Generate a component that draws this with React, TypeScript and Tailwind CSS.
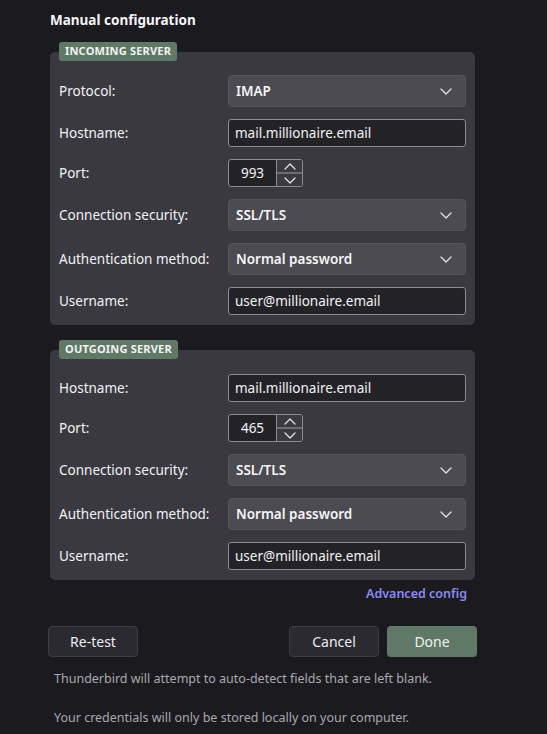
import React from "react";

const font = { fontFamily: '"Noto Sans", "Open Sans", sans-serif' };

const Chevron: React.FC<{ up?: boolean }> = ({ up }) => (
  <svg width="12" height="7" viewBox="0 0 12 7" fill="none" className="text-[#e8e8ec]">
    <path
      d={up ? "M1 6L6 1L11 6" : "M1 1L6 6L11 1"}
      stroke="currentColor"
      strokeWidth="1.2"
      strokeLinecap="round"
      strokeLinejoin="round"
    />
  </svg>
);

const Label: React.FC<{ children: React.ReactNode }> = ({ children }) => (
  <div className="w-[169px] shrink-0 text-[13.5px] text-[#f2f2f5]">{children}</div>
);

const Select: React.FC<{ value: string }> = ({ value }) => (
  <div className="flex h-[32px] flex-1 items-center justify-between rounded-[4px] border border-[#56555b] bg-[#4c4b51] pl-[7px] pr-[13px]">
    <span className="text-[13.5px] font-semibold text-[#f5f5f7]">{value}</span>
    <Chevron />
  </div>
);

const Input: React.FC<{ value: string }> = ({ value }) => (
  <div className="flex h-[28px] flex-1 items-center rounded-[3px] border border-[#8d8c93] bg-[#232327] px-[6px] text-[13.5px] text-[#f2f2f5]">
    {value}
  </div>
);

const Spin: React.FC<{ value: string }> = ({ value }) => (
  <div className="flex h-[28px] w-[75px] overflow-hidden rounded-[3px] border border-[#8d8c93] bg-[#232327]">
    <div className="flex flex-1 items-center justify-center text-[13.5px] text-[#f2f2f5]">{value}</div>
    <div className="flex w-[26px] flex-col border-l border-[#8d8c93] bg-[#3b3a40]">
      <div className="flex flex-1 items-center justify-center border-b-2 border-[#6e6d73]">
        <Chevron up />
      </div>
      <div className="flex flex-1 items-center justify-center">
        <Chevron />
      </div>
    </div>
  </div>
);

const Row: React.FC<{ label: string; children: React.ReactNode }> = ({ label, children }) => (
  <div className="flex items-center">
    <Label>{label}</Label>
    <div className="flex flex-1">{children}</div>
  </div>
);

const Panel: React.FC<{ title: string; pt: string; children: React.ReactNode }> = ({ title, pt, children }) => (
  <div className={`relative rounded-[5px] bg-[#3a393f] pb-[10px] pl-[9px] pr-[9px] ${pt}`}>
    <div className="absolute left-[9px] top-[-10px] flex h-[19px] items-center rounded-[3px] bg-[#5f7966] px-[6px] text-[11px] font-bold tracking-[0.2px] text-[#f2f2f2]">
      {title}
    </div>
    <div className="flex flex-col gap-3">{children}</div>
  </div>
);

export default function App() {
  return (
    <div className="min-h-screen w-[547px] bg-[#1b1a1f] pl-[50px] pr-[72px] pt-[10px]" style={font}>
      <h1 className="h-[21px] text-[13.5px] font-bold leading-[21px] text-[#f5f5f7]">Manual configuration</h1>

      <div className="mt-[21px]">
        <Panel title="INCOMING SERVER" pt="pt-[23px]">
          <Row label="Protocol:">
            <Select value="IMAP" />
          </Row>
          <Row label="Hostname:">
            <Input value="mail.millionaire.email" />
          </Row>
          <Row label="Port:">
            <Spin value="993" />
          </Row>
          <Row label="Connection security:">
            <Select value="SSL/TLS" />
          </Row>
          <Row label="Authentication method:">
            <Select value="Normal password" />
          </Row>
          <Row label="Username:">
            <Input value="user@millionaire.email" />
          </Row>
        </Panel>
      </div>

      <div className="mt-[25px]">
        <Panel title="OUTGOING SERVER" pt="pt-[24px]">
          <Row label="Hostname:">
            <Input value="mail.millionaire.email" />
          </Row>
          <Row label="Port:">
            <Spin value="465" />
          </Row>
          <Row label="Connection security:">
            <Select value="SSL/TLS" />
          </Row>
          <Row label="Authentication method:">
            <Select value="Normal password" />
          </Row>
          <Row label="Username:">
            <Input value="user@millionaire.email" />
          </Row>
        </Panel>
      </div>

      <div className="mt-[5px] flex justify-end pr-[8px]">
        <span className="text-[12.5px] font-semibold leading-[18px] text-[#8b8bf0]">Advanced config</span>
      </div>

      <div className="mx-[-2px] mt-[23px] flex items-center">
        <button className="h-[31px] w-[90px] rounded-[4px] border border-[#3e3d43] bg-[#2b2a30] text-[14px] text-[#ececf0]">
          Re-test
        </button>
        <div className="ml-auto flex gap-2">
          <button className="h-[31px] w-[90px] rounded-[4px] border border-[#3e3d43] bg-[#2b2a30] text-[14px] text-[#ececf0]">
            Cancel
          </button>
          <button className="h-[31px] w-[90px] rounded-[4px] bg-[#5f7966] text-[14px] text-[#f2f2f2]">
            Done
          </button>
        </div>
      </div>

      <div className="mt-[13px] pl-[4px] text-[12.5px] leading-[18px] text-[#a9a9ae]">
        <p>Thunderbird will attempt to auto-detect fields that are left blank.</p>
        <p className="mt-[21px]">Your credentials will only be stored locally on your computer.</p>
      </div>
    </div>
  );
}
